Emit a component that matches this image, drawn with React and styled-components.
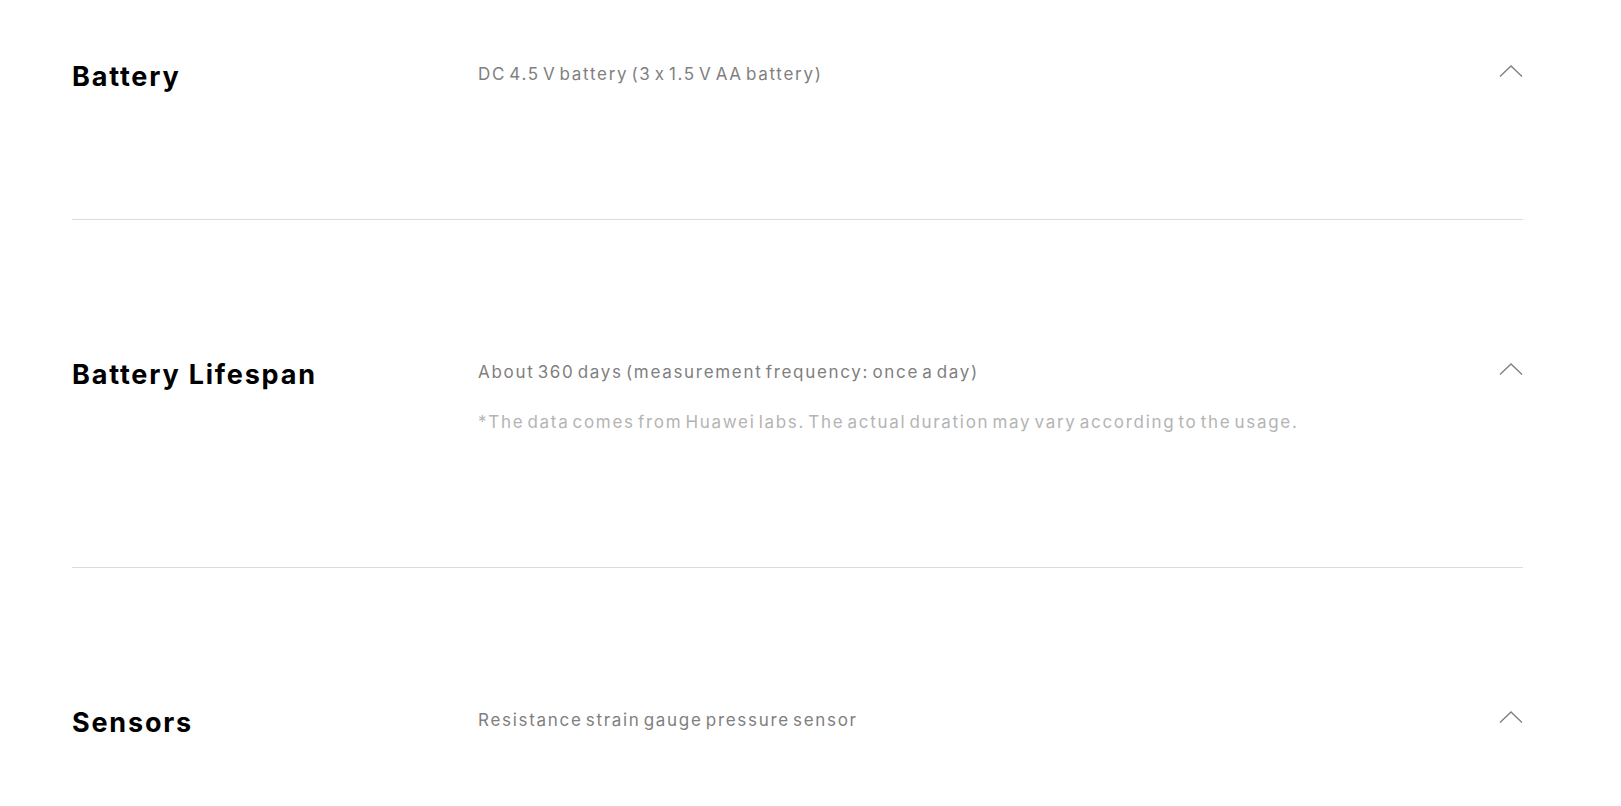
import React from 'react';
import styled, {createGlobalStyle} from "styled-components";

const GlobalStyle = createGlobalStyle`
  body {
    margin: 0;
    background: #ffffff;
    font-family: Inter, "Noto Sans", sans-serif;
  }
`;

const Specs = styled.div`
  margin: 0 98px 0 72px;
`;

const SpecRow = styled.div`
  display: grid;
  grid-template-columns: 406px 1fr 24px;
  align-items: start;
  padding: ${p => p.$first ? '60px' : '138px'} 0 ${p => p.$last ? '40px' : '131px'};
  border-bottom: ${p => p.$last ? 'none' : '1px solid #dcdcdc'};
`;

const Title = styled.h3`
  margin: 3px 0 -3px;
  font-size: 27px;
  line-height: 28px;
  font-weight: 700;
  color: #000;
  letter-spacing: 1.8px;
`;

const Details = styled.div`
  display: flex;
  flex-direction: column;
  gap: 22px;
`;

const Value = styled.p`
  margin: 0;
  font-size: 17px;
  line-height: 28px;
  color: #7f7f7f;
  letter-spacing: 1.7px;
  word-spacing: -3.3px;
`;

const Note = styled(Value)`
  color: #b4b4b4;
`;

const Toggle = styled.button`
  display: flex;
  align-items: center;
  justify-content: center;
  width: 24px;
  height: 22px;
  padding: 0;
  border: none;
  background: none;
  cursor: pointer;
`;

const Chevron = () => (
    <svg width="24" height="12" viewBox="0 0 24 12" fill="none">
        <polyline points="1,11.5 12,1 23,11.5" stroke="#808080" strokeWidth="1.4"/>
    </svg>
);

const specs = [
    {title: 'Battery', value: 'DC 4.5 V battery (3 x 1.5 V AA battery)'},
    {
        title: 'Battery Lifespan',
        value: 'About 360 days (measurement frequency: once a day)',
        note: '*The data comes from Huawei labs. The actual duration may vary according to the usage.'
    },
    {title: 'Sensors', value: 'Resistance strain gauge pressure sensor'},
];

export default function App() {
    return (
        <>
            <GlobalStyle/>
            <Specs>
                {specs.map((s, i) =>
                    <SpecRow key={s.title} $first={i === 0} $last={i === specs.length - 1}>
                        <Title>{s.title}</Title>
                        <Details>
                            <Value>{s.value}</Value>
                            {s.note && <Note>{s.note}</Note>}
                        </Details>
                        <Toggle aria-label="collapse"><Chevron/></Toggle>
                    </SpecRow>
                )}
            </Specs>
        </>
    );
}
